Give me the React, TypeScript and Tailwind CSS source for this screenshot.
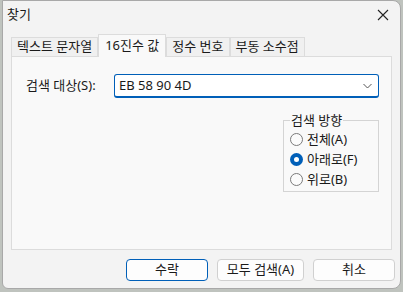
import React from 'react';

const font = { fontFamily: '"Noto Sans", "Noto Sans CJK KR", sans-serif' };

const tabs = ['텍스트 문자열', '16진수 값', '정수 번호', '부동 소수점'];

function Radio({ label, checked }: { label: string; checked?: boolean }) {
  return (
    <div className="flex items-center gap-[4px] h-[20px]">
      {checked ? (
        <span className="w-[13px] h-[13px] rounded-full bg-[#005fb8] flex items-center justify-center">
          <span className="w-[5px] h-[5px] rounded-full bg-white" />
        </span>
      ) : (
        <span className="w-[13px] h-[13px] rounded-full border border-[#7a7a7a] bg-[#fbfbfb]" />
      )}
      <span className="text-[13px] text-[#1a1a1a] leading-none">{label}</span>
    </div>
  );
}

export default function App() {
  return (
    <div className="w-[403px] h-[292px] bg-[#bfc3be] overflow-hidden" style={font}>
      <div className="ml-[2px] w-[399px] h-[289px] rounded-r-[8px] rounded-bl-[6px] border border-[#a8a8a8] bg-[#f3f3f3] flex flex-col">
        {/* title bar */}
        <div className="h-[28px] flex items-center justify-between pl-[4px] pr-[8px]">
          <span className="text-[13px] text-[#1a1a1a]">찾기</span>
          <svg width="12" height="12" viewBox="0 0 12 12" className="mr-[3px]">
            <path d="M1 1 L11 11 M11 1 L1 11" stroke="#222" strokeWidth="1.1" />
          </svg>
        </div>

        {/* tabs */}
        <div className="flex items-end pl-[8px] h-[27px]">
          {tabs.map((t, i) =>
            i === 1 ? (
              <div
                key={t}
                className="h-[23px] px-[6px] flex items-center bg-[#f9f9f9] border border-b-0 border-[#dcdcdc] text-[13px] text-[#1a1a1a] -mb-px relative z-10"
              >
                {t}
              </div>
            ) : (
              <div
                key={t}
                className="h-[19px] px-[5px] flex items-center bg-[#f0f0f0] border border-b-0 border-[#dcdcdc] text-[13px] text-[#1a1a1a]"
              >
                {t}
              </div>
            )
          )}
        </div>

        {/* panel */}
        <div className="mx-[8px] h-[194px] bg-[#f9f9f9] border border-[#dcdcdc] pt-[17px] pl-[14px] pr-[12px] flex flex-col">
          <div className="flex items-center">
            <span className="w-[88px] text-[13px] text-[#1a1a1a]">검색 대상(S):</span>
            <div className="w-[265px] h-[24px] rounded-[3px] border border-[#005fb8] border-b-2 bg-white flex items-center justify-between pl-[4px] pr-[6px]">
              <span className="text-[13px] text-[#1a1a1a]">EB 58 90 4D</span>
              <svg width="9" height="6" viewBox="0 0 9 6">
                <path d="M0.5 1 L4.5 5 L8.5 1" stroke="#555" strokeWidth="1" fill="none" />
              </svg>
            </div>
          </div>

          <div className="flex justify-end mt-[16px]">
            <fieldset className="w-[96px] h-[78px] border border-[#d4d4d4] pl-[6px] pt-[2px]">
              <legend className="px-[1px] text-[13px] text-[#1a1a1a] leading-none">검색 방향</legend>
              <Radio label="전체(A)" />
              <Radio label="아래로(F)" checked />
              <Radio label="위로(B)" />
            </fieldset>
          </div>
        </div>

        {/* buttons */}
        <div className="flex justify-end gap-[9px] pr-[5px] mt-[9px]">
          <button className="w-[82px] h-[22px] rounded-[4px] border border-[#005fb8] bg-[#fdfdfd] text-[13px] text-[#1a1a1a]">
            수락
          </button>
          <button className="w-[87px] h-[22px] rounded-[4px] border border-[#d0d0d0] bg-[#fdfdfd] text-[13px] text-[#1a1a1a]">
            모두 검색(A)
          </button>
          <button className="w-[82px] h-[22px] rounded-[4px] border border-[#d0d0d0] bg-[#fdfdfd] text-[13px] text-[#1a1a1a]">
            취소
          </button>
        </div>
      </div>
    </div>
  );
}
